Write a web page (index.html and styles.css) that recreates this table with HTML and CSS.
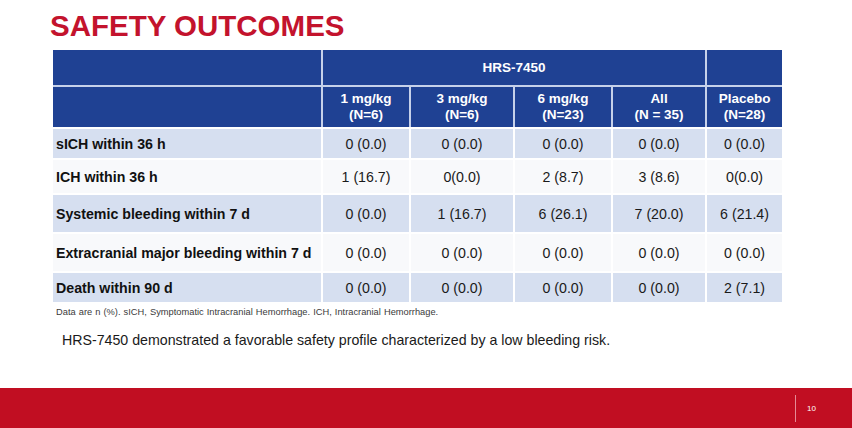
FILE: index.html
```html
<!DOCTYPE html>
<html lang="en">
<head>
<meta charset="utf-8">
<title>Safety Outcomes</title>
<link rel="stylesheet" href="styles.css">
</head>
<body>
<div class="slide">
  <h1 class="title">SAFETY OUTCOMES</h1>
  <table class="data">
    <colgroup>
      <col class="c-label"><col class="c-1"><col class="c-3"><col class="c-6"><col class="c-all"><col class="c-pl">
    </colgroup>
    <thead>
      <tr class="h1">
        <th></th>
        <th colspan="4">HRS-7450</th>
        <th></th>
      </tr>
      <tr class="h2">
        <th></th>
        <th>1 mg/kg<br>(N=6)</th>
        <th>3 mg/kg<br>(N=6)</th>
        <th>6 mg/kg<br>(N=23)</th>
        <th>All<br>(N = 35)</th>
        <th>Placebo<br>(N=28)</th>
      </tr>
    </thead>
    <tbody>
      <tr class="shade r1">
        <td>sICH within 36 h</td><td>0 (0.0)</td><td>0 (0.0)</td><td>0 (0.0)</td><td>0 (0.0)</td><td>0 (0.0)</td>
      </tr>
      <tr class="plain r2">
        <td>ICH within 36 h</td><td>1 (16.7)</td><td>0(0.0)</td><td>2 (8.7)</td><td>3 (8.6)</td><td>0(0.0)</td>
      </tr>
      <tr class="shade r3">
        <td>Systemic bleeding within 7 d</td><td>0 (0.0)</td><td>1 (16.7)</td><td>6 (26.1)</td><td>7 (20.0)</td><td>6 (21.4)</td>
      </tr>
      <tr class="plain r4">
        <td>Extracranial major bleeding within 7 d</td><td>0 (0.0)</td><td>0 (0.0)</td><td>0 (0.0)</td><td>0 (0.0)</td><td>0 (0.0)</td>
      </tr>
      <tr class="shade r5">
        <td>Death within 90 d</td><td>0 (0.0)</td><td>0 (0.0)</td><td>0 (0.0)</td><td>0 (0.0)</td><td>2 (7.1)</td>
      </tr>
    </tbody>
  </table>
  <p class="footnote">Data are n (%). sICH, Symptomatic Intracranial Hemorrhage. ICH, Intracranial Hemorrhage.</p>
  <p class="message">HRS-7450 demonstrated a favorable safety profile characterized by a low bleeding risk.</p>
  <div class="spacer"></div>
  <footer class="footer">
    <span class="divider"></span>
    <span class="page">10</span>
  </footer>
</div>
</body>
</html>
```
FILE: styles.css
```css
* { box-sizing: border-box; }
html, body { margin: 0; padding: 0; background: #ffffff; }
.slide {
  width: 852px;
  height: 428px;
  display: flex;
  flex-direction: column;
  font-family: "Liberation Sans", Arial, sans-serif;
  color: #1a1a1a;
  overflow: hidden;
}
.title {
  margin: 11px 0 0 50px;
  font-size: 29.5px;
  line-height: 30px;
  font-weight: 700;
  color: #c3132d;
}
.data {
  margin: 9px 0 0 53px;
  width: 729px;
  table-layout: fixed;
  border-collapse: separate;
  border-spacing: 0;
}
.c-label { width: 268px; }
.c-1 { width: 88px; }
.c-3 { width: 104px; }
.c-6 { width: 98px; }
.c-all { width: 94px; }
.c-pl { width: 77px; }
.data th {
  background: #1f4193;
  color: #ffffff;
  font-size: 13.5px;
  line-height: 16px;
  font-weight: 700;
  text-align: center;
  padding: 0;
  border-left: 2px solid #c6d1ea;
}
.data th:first-child { border-left: none; }
.h2 th { border-top: 2px solid #c6d1ea; }
.h1 { height: 35px; }
.h2 { height: 42px; }
.data td {
  font-size: 14.2px;
  line-height: 16px;
  text-align: center;
  padding: 0;
  border-left: 2px solid #ffffff;
  border-top: 2px solid #ffffff;
}
.data td:first-child {
  border-left: none;
  text-align: left;
  font-weight: 700;
  padding-left: 3px;
  color: #111111;
}
.shade td { background: #d6dff0; }
.plain td { background: #f8f9fb; }
.r1 { height: 31px; }
.r2 { height: 35px; }
.r3 { height: 39px; }
.r4 { height: 39px; }
.r5 { height: 31px; }
.footnote {
  margin: 4px 0 0 56px;
  font-size: 9.3px;
  line-height: 12px;
  word-spacing: 0.5px;
  color: #3a3a3a;
}
.message {
  margin: 14px 0 0 62px;
  font-size: 14.2px;
  line-height: 16px;
  color: #1a1a1a;
}
.spacer { flex: 1; }
.footer {
  height: 40px;
  background: #c10e22;
  display: flex;
  align-items: center;
  justify-content: flex-end;
  padding-right: 36px;
  gap: 11px;
}
.divider {
  width: 1px;
  height: 27px;
  background: #e58a95;
}
.page {
  font-size: 8px;
  color: #ffffff;
}
```
